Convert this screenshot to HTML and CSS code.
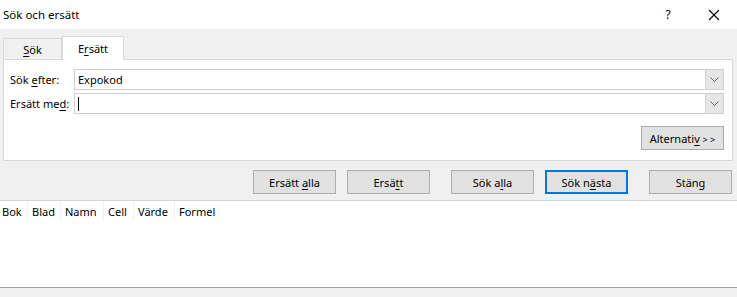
FILE: index.html
```html
<!DOCTYPE html>
<html lang="sv">
<head>
  <meta charset="UTF-8">
  <meta name="viewport" content="width=device-width, initial-scale=1.0">
  <title>Sök och ersätt</title>
  <link rel="stylesheet" href="styles.css">
</head>
<body>
  <div class="titlebar">
    <span class="title">Sök och ersätt</span>
    <span class="help">?</span>
    <span class="close">
      <svg width="12" height="12" viewBox="0 0 12 12"><path d="M1 1 L11 11 M11 1 L1 11" stroke="#000" stroke-width="1.1" fill="none"/></svg>
    </span>
  </div>

  <div class="main">
    <div class="tabs">
      <div class="tab"><u>S</u>ök</div>
      <div class="tab active">E<u>r</u>sätt</div>
    </div>

    <div class="panel">
      <div class="row">
        <label class="lbl">Sök <u>e</u>fter:</label>
        <div class="combo">
          <span class="value">Expokod</span>
          <span class="drop"><svg width="9" height="5" viewBox="0 0 9 5"><path d="M0.5 0.5 L4.5 4.5 L8.5 0.5" stroke="#606060" fill="none"/></svg></span>
        </div>
      </div>
      <div class="row">
        <label class="lbl">Ersätt me<u>d</u>:</label>
        <div class="combo">
          <span class="value"><span class="caret"></span></span>
          <span class="drop"><svg width="9" height="5" viewBox="0 0 9 5"><path d="M0.5 0.5 L4.5 4.5 L8.5 0.5" stroke="#606060" fill="none"/></svg></span>
        </div>
      </div>
      <div class="options">
        <button class="btn opt">Alternati<u>v</u> <span class="arrows">&gt; &gt;</span></button>
      </div>
    </div>

    <div class="actions">
      <button class="btn">Ersätt <u>a</u>lla</button>
      <button class="btn">Ersä<u>t</u>t</button>
      <button class="btn wide-gap">Sök a<u>l</u>la</button>
      <button class="btn default">Sök n<u>ä</u>sta</button>
      <button class="btn wide-gap">Stäng</button>
    </div>

    <div class="results">
      <div class="cols">
        <span class="col c-bok">Bok</span>
        <span class="col c-blad">Blad</span>
        <span class="col c-namn">Namn</span>
        <span class="col c-cell">Cell</span>
        <span class="col c-varde">Värde</span>
        <span class="col c-formel">Formel</span>
      </div>
    </div>
  </div>
</body>
</html>
```

FILE: styles.css
```css
body {
  margin: 0;
  width: 737px;
  height: 297px;
  overflow: hidden;
  font-family: "Noto Sans", "Open Sans", sans-serif;
  font-size: 11px;
  color: #000;
  background: #f0f0f0;
  white-space: nowrap;
}

u {
  text-decoration: underline;
  text-underline-offset: 2px;
}

.titlebar {
  height: 29px;
  background: #fff;
  display: flex;
  align-items: center;
  padding-left: 3px;
}

.title {
  font-size: 11.5px;
  flex: 1;
  padding-bottom: 1px;
}

.help {
  width: 46px;
  text-align: center;
  font-size: 12px;
}

.close {
  width: 46px;
  display: flex;
  justify-content: center;
}

.main {
  background: #f0f0f0;
  height: 268px;
}

.tabs {
  display: flex;
  align-items: flex-end;
  padding: 7px 0 0 3px;
  height: 23px;
  position: relative;
  z-index: 1;
}

.tab {
  width: 57px;
  height: 20px;
  border: 1px solid #d9d9d9;
  border-bottom: none;
  display: flex;
  align-items: center;
  justify-content: center;
}

.tab.active {
  width: 60px;
  height: 23px;
  background: #fff;
  margin-bottom: -1px;
}

.panel {
  margin: 0 4px 0 3px;
  border: 1px solid #d9d9d9;
  background: #fff;
  padding: 9px 8px 0 6px;
  box-sizing: border-box;
  height: 102px;
}

.row {
  display: flex;
  align-items: center;
  margin-bottom: 3px;
}

.lbl {
  width: 64px;
  flex: none;
}

.combo {
  flex: 1;
  height: 21px;
  border: 1px solid #cfcfcf;
  box-sizing: border-box;
  display: flex;
  align-items: center;
}

.value {
  flex: 1;
  padding-left: 3px;
  display: flex;
  align-items: center;
}

.caret {
  display: inline-block;
  width: 1px;
  height: 14px;
  background: #000;
}

.drop {
  width: 17px;
  height: 19px;
  background: #e6e6e6;
  border-left: 1px solid #d4d4d4;
  display: flex;
  align-items: center;
  justify-content: center;
}

.options {
  display: flex;
  justify-content: flex-end;
  margin-top: 12px;
}

.btn {
  font-family: inherit;
  font-size: 11px;
  color: #000;
  background: #e1e1e1;
  border: 1px solid #adadad;
  width: 83px;
  height: 24px;
  padding: 0;
  box-sizing: border-box;
}

.arrows {
  font-size: 9px;
}

.btn.default {
  border: 1px solid #0078d7;
  box-shadow: inset 0 0 0 1px #0078d7;
}

.actions {
  display: flex;
  justify-content: flex-end;
  gap: 11px;
  padding: 9px 5px 0 0;
  height: 39px;
  box-sizing: border-box;
}

.actions .wide-gap {
  margin-left: 10px;
}

.results {
  border-top: 1px solid #d5d5d5;
  border-bottom: 1px solid #a0a0a0;
  background: #fff;
  height: 86px;
}

.cols {
  display: flex;
  height: 20px;
  align-items: center;
}

.col {
  padding-left: 2px;
  border-right: 1px solid #f0f0f0;
  box-sizing: border-box;
  height: 20px;
  display: flex;
  align-items: center;
}

.c-bok { width: 28px; }
.c-blad { width: 33px; padding-left: 4px; }
.c-namn { width: 43px; padding-left: 4px; }
.c-cell { width: 30px; padding-left: 4px; }
.c-varde { width: 41px; padding-left: 4px; }
.c-formel { width: 60px; padding-left: 4px; border-right: none; }
```
